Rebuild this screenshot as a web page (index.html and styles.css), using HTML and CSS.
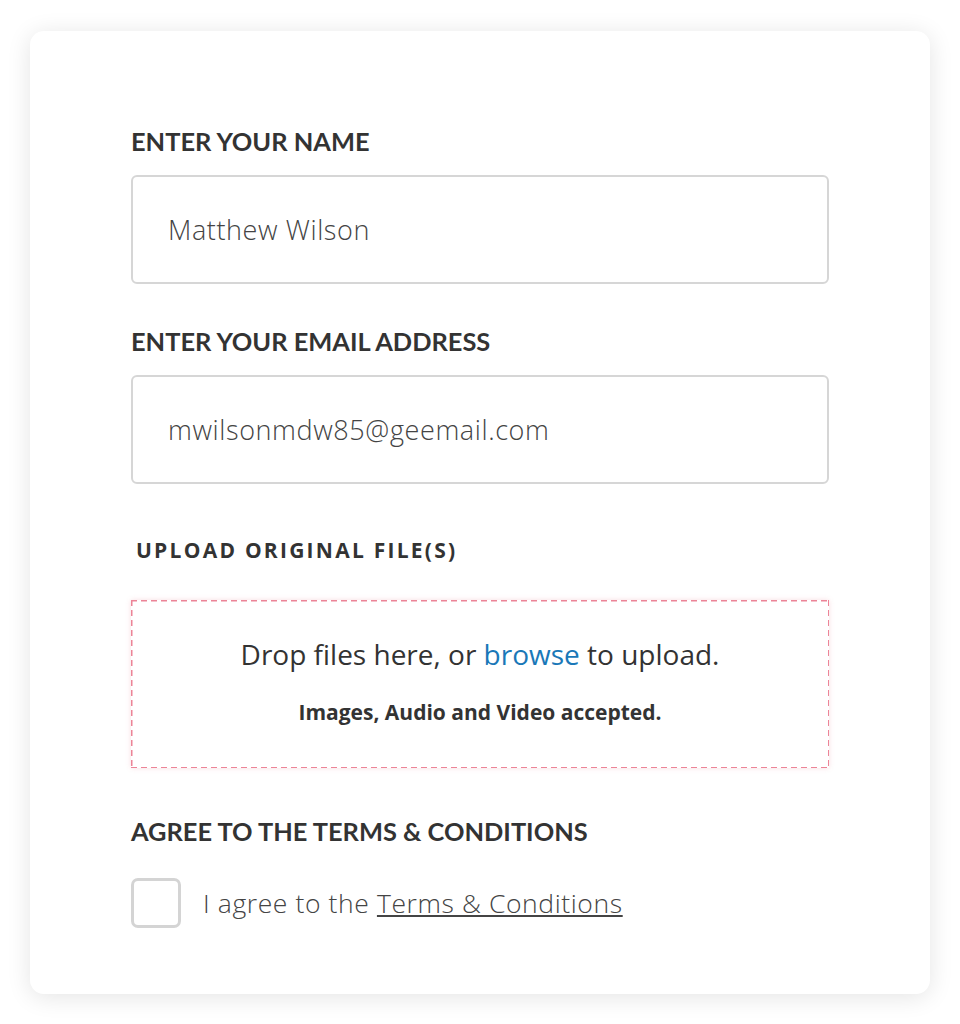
FILE: index.html
```html
<!DOCTYPE html>
<html lang="en">
<head>
    <meta charset="UTF-8">
    <meta name="viewport" content="width=device-width, initial-scale=1.0">
    <title>Upload Form</title>
    <link rel="stylesheet" href="styles.css">
</head>
<body>

<div class="card">
    <form class="upload-form">
        <div class="form-group">
            <label class="label" for="name">ENTER YOUR NAME</label>
            <div class="field" id="name">Matthew Wilson</div>
        </div>
        <div class="form-group">
            <label class="label" for="email">ENTER YOUR EMAIL ADDRESS</label>
            <div class="field" id="email">mwilsonmdw85@geemail.com</div>
        </div>
        <div class="form-group">
            <label class="label label-upload">UPLOAD ORIGINAL FILE(S)</label>
            <div class="dropzone">
                <p class="drop-main">Drop files here, or <a href="#" class="browse">browse</a> to upload.</p>
                <p class="drop-note">Images, Audio and Video accepted.</p>
            </div>
        </div>
        <div class="form-group terms">
            <label class="label">AGREE TO THE TERMS &amp; CONDITIONS</label>
            <div class="check-row">
                <span class="checkbox"></span>
                <span class="check-text">I agree to the <a href="#" class="terms-link">Terms &amp; Conditions</a></span>
            </div>
        </div>
    </form>
</div>

</body>
</html>
```

FILE: styles.css
```css
body {
    margin: 0;
    padding: 31px 30px;
    background-color: #fff;
    font-family: Lato, "Open Sans", sans-serif;
}
.card {
    width: 900px;
    height: 963px;
    box-sizing: border-box;
    background-color: #fff;
    border-radius: 14px;
    box-shadow: 0 3px 24px rgba(0, 0, 0, 0.11);
    padding: 95px 101px 0 101px;
}
.upload-form {
    width: 698px;
}
.form-group {
    margin-bottom: 42px;
}
.label {
    display: block;
    font-family: Lato, sans-serif;
    font-weight: 700;
    font-size: 25.4px;
    color: #333;
    line-height: 30px;
    margin-bottom: 19px;
}
.field {
    height: 109px;
    box-sizing: border-box;
    border: 2px solid #d6d6d6;
    border-radius: 6px;
    padding: 0 35px;
    display: flex;
    align-items: center;
    font-family: "Open Sans", sans-serif;
    font-weight: 300;
    font-size: 27px;
    letter-spacing: 0.6px;
    color: #444;
}
.label-upload {
    font-family: "Open Sans", sans-serif;
    font-weight: 700;
    font-size: 21px;
    letter-spacing: 2.25px;
    padding: 9px 0 0 5px;
    margin-bottom: 35px;
}
.dropzone {
    height: 168px;
    box-sizing: border-box;
    background-image:
        repeating-linear-gradient(90deg, #ec8497 0 6px, transparent 6px 10px),
        repeating-linear-gradient(90deg, #ec8497 0 6px, transparent 6px 10px),
        repeating-linear-gradient(180deg, #ec8497 0 6px, transparent 6px 10px),
        repeating-linear-gradient(180deg, #ec8497 0 6px, transparent 6px 10px);
    background-size: 100% 1.5px, 100% 1.5px, 1.5px 100%, 1.5px 100%;
    background-position: 0 0, 0 100%, 0 0, 100% 0;
    background-repeat: no-repeat;
    box-shadow: 0 0 5px rgba(236, 138, 156, 0.3);
    text-align: center;
    font-family: "Open Sans", sans-serif;
    color: #333;
    padding-top: 35px;
}
.drop-main {
    margin: 0;
    font-size: 28px;
    line-height: 38px;
}
.browse {
    color: #1a78b8;
    text-decoration: none;
}
.drop-note {
    margin: 25px 0 0;
    font-size: 21px;
    line-height: 28px;
    font-weight: 700;
}
.terms {
    margin-top: 48px;
}
.check-row {
    display: flex;
    align-items: center;
    margin-top: 32px;
}
.checkbox {
    width: 50px;
    height: 50px;
    box-sizing: border-box;
    border: 3px solid #d4d4d4;
    border-radius: 7px;
    margin-right: 22px;
}
.check-text {
    font-family: "Open Sans", sans-serif;
    font-weight: 300;
    font-size: 26.5px;
    letter-spacing: 0.6px;
    color: #444;
}
.terms-link {
    color: #444;
    text-decoration: underline;
}
```
